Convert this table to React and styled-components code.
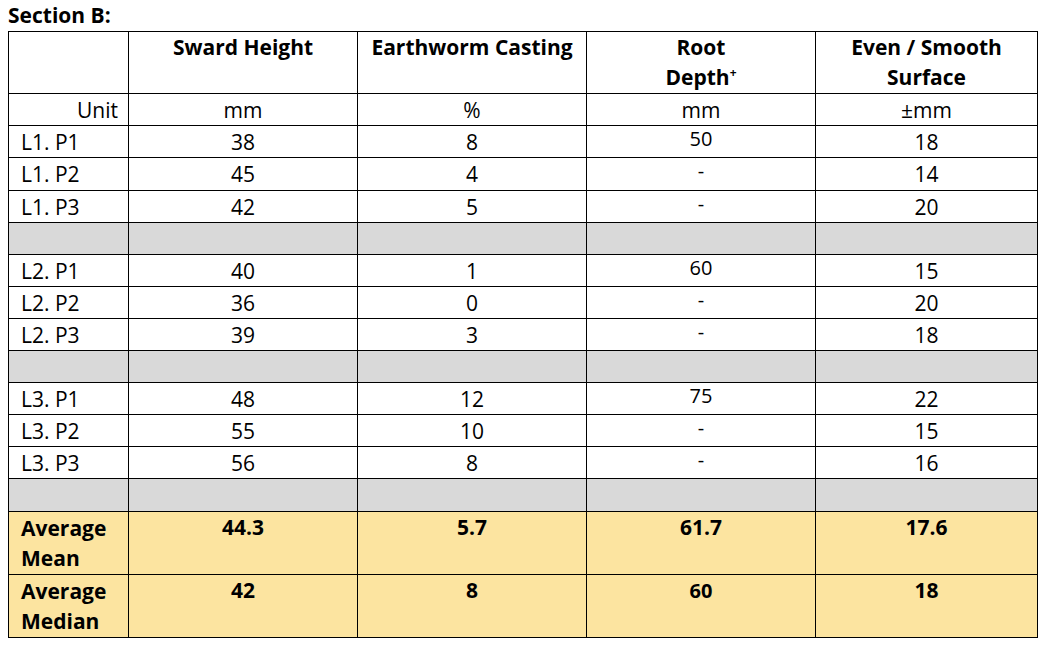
import React from "react";
import styled, { createGlobalStyle } from "styled-components";

const Global = createGlobalStyle`
  html, body { margin: 0; padding: 0; background: #ffffff; }
  body { font-family: "Open Sans", Lato, "Liberation Sans", sans-serif; color: #000; }
`;

const Page = styled.div`
  padding: 0 0 0 8px;
  width: 1044px;
  box-sizing: border-box;
`;

const Title = styled.div`
  font-weight: 700;
  font-size: 21px;
  line-height: 31px;
  height: 31px;
`;

const Table = styled.table`
  border-collapse: collapse;
  table-layout: fixed;
  width: 1030px;
  font-size: 21px;
`;

const Col = styled.col`
  width: ${(p) => p.$w}px;
`;

const Row = styled.tr`
  height: ${(p) => p.$h}px;
  background: ${(p) => p.$bg || "#ffffff"};
`;

const Cell = styled.td`
  border: 1px solid #000;
  padding: ${(p) => (p.$top ? `${p.$pt || 0}px 10px 0` : "0 10px")};
  vertical-align: ${(p) => (p.$top ? "top" : "middle")};
  text-align: ${(p) => p.$align || "center"};
  font-weight: ${(p) => (p.$bold ? 700 : 400)};
  line-height: 30px;
  white-space: nowrap;
`;

const SmallCell = styled(Cell)`
  font-size: 20px;
  line-height: 26px;
  vertical-align: top;
  padding-top: ${(p) => p.$pt || 0}px;
`;

const Label = styled(Cell)`
  padding-left: ${(p) => (p.$align === "right" ? "10px" : "12px")};
  padding-right: 10px;
`;

const Sup = styled.sup`
  font-size: 12px;
  vertical-align: 8px;
  line-height: 0;
`;

const groups = [
  [
    ["L1. P1", "38", "8", "50", "18"],
    ["L1. P2", "45", "4", "-", "14", 33],
    ["L1. P3", "42", "5", "-", "20"],
  ],
  [
    ["L2. P1", "40", "1", "60", "15"],
    ["L2. P2", "36", "0", "-", "20"],
    ["L2. P3", "39", "3", "-", "18"],
  ],
  [
    ["L3. P1", "48", "12", "75", "22"],
    ["L3. P2", "55", "10", "-", "15"],
    ["L3. P3", "56", "8", "-", "16"],
  ],
];

const GRAY = "#d9d9d9";
const GOLD = "#fce4a0";

export default function App() {
  return (
    <Page>
      <Global />
      <Title>Section B:</Title>
      <Table>
        <colgroup>
          <Col $w={120} />
          <Col $w={229} />
          <Col $w={229} />
          <Col $w={229} />
          <Col $w={222} />
        </colgroup>
        <tbody>
          <Row $h={62}>
            <Cell $top />
            <Cell $top $bold>Sward Height</Cell>
            <Cell $top $bold>Earthworm Casting</Cell>
            <Cell $top $bold>
              Root
              <br />
              Depth<Sup>+</Sup>
            </Cell>
            <Cell $top $bold>
              Even / Smooth
              <br />
              Surface
            </Cell>
          </Row>
          <Row $h={32}>
            <Label $align="right">Unit</Label>
            <Cell>mm</Cell>
            <Cell>%</Cell>
            <Cell>mm</Cell>
            <Cell>±mm</Cell>
          </Row>
          {groups.map((g, gi) => (
            <React.Fragment key={gi}>
              {g.map((r) => (
                <Row $h={r[5] || 32} key={r[0]}>
                  <Label $align="left">{r[0]}</Label>
                  <Cell>{r[1]}</Cell>
                  <Cell>{r[2]}</Cell>
                  <SmallCell>{r[3]}</SmallCell>
                  <Cell>{r[4]}</Cell>
                </Row>
              ))}
              <Row $h={gi === 2 ? 33 : 32} $bg={GRAY}>
                <Cell />
                <Cell />
                <Cell />
                <Cell />
                <Cell />
              </Row>
            </React.Fragment>
          ))}
          <Row $h={63} $bg={GOLD}>
            <Label $align="left" $top $pt={1} $bold>
              Average
              <br />
              Mean
            </Label>
            <Cell $top $bold>44.3</Cell>
            <Cell $top $bold>5.7</Cell>
            <Cell $top $bold>61.7</Cell>
            <Cell $top $bold>17.6</Cell>
          </Row>
          <Row $h={63} $bg={GOLD}>
            <Label $align="left" $top $pt={1} $bold>
              Average
              <br />
              Median
            </Label>
            <Cell $top $bold>42</Cell>
            <Cell $top $bold>8</Cell>
            <SmallCell $bold $pt={3}>60</SmallCell>
            <Cell $top $bold>18</Cell>
          </Row>
        </tbody>
      </Table>
    </Page>
  );
}
